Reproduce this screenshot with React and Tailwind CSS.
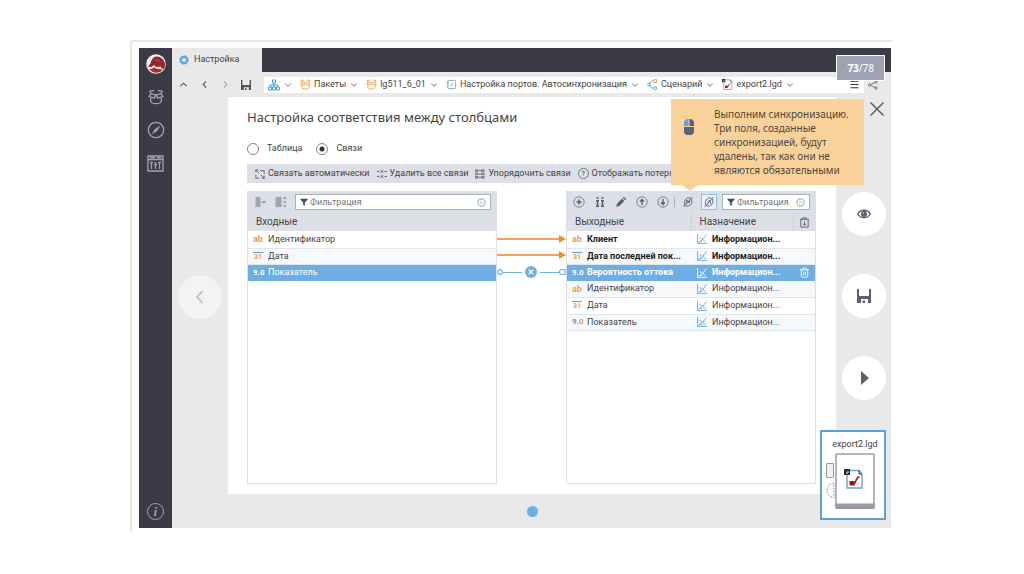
import { useState } from 'react'
import { Filter, Menu, X, Trash2 } from 'lucide-react'

const outputs = [
  { type: 'ab', name: 'Клиент', linked: true },
  { type: '31', name: 'Дата последней пок...', linked: true },
  { type: '9.0', name: 'Вероятность оттока', linked: true, selected: true },
  { type: 'ab', name: 'Идентификатор' },
  { type: '31', name: 'Дата' },
  { type: '9.0', name: 'Показатель' },
]

const inputs = [
  { type: 'ab', name: 'Идентификатор' },
  { type: '31', name: 'Дата' },
  { type: '9.0', name: 'Показатель', selected: true },
]

function Icon({ children, className = 'size-3', box = 12 }) {
  return (
    <svg viewBox={`0 0 ${box} ${box}`} className={`shrink-0 ${className}`} fill="none" stroke="currentColor" aria-hidden="true">
      {children}
    </svg>
  )
}

function Chevron({ className = 'size-2' }) {
  return (
    <Icon className={className} box={8}>
      <path d="M1.200 2.600 4 5.200 6.800 2.600" />
    </Icon>
  )
}

function OpenBox({ className }) {
  return (
    <Icon className={className}>
      <path d="M2 6v3.200c0 1 2 1.800 4 1.800s4-.8 4-1.800V6M2.200 3.400 6 4.600l3.800-1.200M2.200 3.400.8 5.600l3.800 1.300L6 4.600l1.400 2.300 3.800-1.300-1.400-2.200M1.200 1.600l3.300-.4M10.800 1.600l-3.300-.4M2.200 3.400l-1-1.800M9.800 3.400l1-1.800" />
    </Icon>
  )
}

function Floppy({ className }) {
  return (
    <svg viewBox="0 0 14 14" className={`shrink-0 ${className}`} fill="currentColor" aria-hidden="true">
      <path d="M0 0h2v7h10V0h2v14h-3v-4H4v4H0ZM5.500 11.500h2.500V14H5.500Z" />
    </svg>
  )
}

function Logo() {
  return (
    <svg viewBox="0 0 20 20" className="size-5" aria-hidden="true">
      <circle cx="10" cy="10" r="9.800" fill="#f5f1f0" />
      <path d="M4.500 9.500C5.500 5 8 2.500 11 2.600c4 .2 7 3 8 7 .2 2-.2 3.800-1.200 5.400-1.600-.2-2.800-1.200-3.300-2.800-1.500 1-3.500 1-5 .2L8 11l-2.500 2-3.500-.6Z" fill="#98252a" />
      <path d="M3 14.800c1.800.6 3.200.2 5-1.200 2.800 1.500 5.500 1.800 8.800 2C13.500 20 6.500 20 3 14.800Z" fill="#b22a2c" />
      <path d="M9.500 6.500c1.500-.8 3-.6 4 .6" stroke="#c98480" strokeWidth=".7" fill="none" />
    </svg>
  )
}

function TypeMark({ type, selected }) {
  if (type === 'ab') {
    return <span className="w-3 shrink-0 text-[9px] leading-3 font-bold text-[#f0a04b]">ab</span>
  }
  if (type === '31') {
    return (
      <span className="mr-[2px] w-[10px] shrink-0 border-t border-[#5a9fd0] text-center text-[7px] leading-2 font-bold text-[#f0a04b]">
        31
      </span>
    )
  }
  return (
    <span className={`w-3 shrink-0 text-[8px] leading-3 font-bold ${selected ? 'text-white' : 'text-[#4fa3d8]'}`}>
      9.<span className={selected ? 'text-white' : 'text-[#f0a04b]'}>0</span>
    </span>
  )
}

function PlotIcon({ selected }) {
  return (
    <Icon className={`size-[10px] ${selected ? 'text-white' : 'text-[#5fa8dc]'}`} box={10}>
      <path d="M.6 0v9.400H10M1.500 8.500 6 5l3.500-4.500M2.500 3l2 2M5 4.500l3 3.500M3 7.500h2" strokeWidth=".9" />
    </Icon>
  )
}

function ShareIcon() {
  return (
    <Icon className="size-[10px] text-[#666]">
      <circle cx="2" cy="6" r="1.400" />
      <circle cx="9.500" cy="2.500" r="1.400" />
      <circle cx="9.500" cy="9.500" r="1.400" />
      <path d="M3.300 5.400 8.200 3.100M3.300 6.600l4.900 2.300" />
    </Icon>
  )
}

function Crumb({ icon, children }) {
  return (
    <li className="flex items-center gap-1">
      <a href="#" className="flex items-center gap-[3px]">
        {icon}
        {children && <span className="whitespace-nowrap">{children}</span>}
      </a>
      <Chevron className="size-2 text-[#777]" />
    </li>
  )
}

function Breadcrumbs() {
  return (
    <nav className="flex h-4 min-w-0 flex-1 items-center bg-white pl-1">
      <ol className="flex items-center gap-2">
        <Crumb
          icon={
            <Icon className="size-3 text-[#4c97cc]">
              <path d="M4.500 1h3v3h-3ZM.6 8h3v3h-3ZM4.500 8h3v3h-3ZM8.400 8h3v3h-3ZM6 4v4M2 8V6h8v2" />
            </Icon>
          }
        />
        <Crumb icon={<OpenBox className="size-[11px] text-[#eba14e]" />}>Пакеты</Crumb>
        <Crumb icon={<OpenBox className="size-[11px] text-[#eba14e]" />}>lg511_6_01</Crumb>
        <Crumb
          icon={
            <Icon className="size-[11px] text-[#7ea9b8]">
              <rect x="2" y="1.500" width="8.500" height="9" rx="1" />
              <path d="M.5 4H3M.5 8H3M5.500 8l2-4" />
            </Icon>
          }
        >
          Настройка портов. Автосинхронизация
        </Crumb>
        <Crumb
          icon={
            <Icon className="size-[11px] text-[#4c97cc]">
              <circle cx="2.200" cy="6" r="1.500" />
              <path d="M3.500 5C4 2.500 5 2 7 2M3.500 7c.5 2.500 1.500 3 3.500 3" />
              <rect x="7.500" y=".8" width="3" height="3" stroke="#eba14e" />
              <circle cx="9" cy="10" r="1.500" />
            </Icon>
          }
        >
          Сценарий
        </Crumb>
        <Crumb icon={<ExportIcon className="size-[11px]" />}>export2.lgd</Crumb>
      </ol>
      <button className="mr-1 ml-auto" aria-label="Меню">
        <Menu className="size-[11px] text-[#333]" strokeWidth={2.500} />
      </button>
    </nav>
  )
}

function ExportIcon({ className }) {
  return (
    <svg viewBox="0 0 20 20" className={`shrink-0 ${className}`} fill="none" aria-hidden="true">
      <path d="M3 6v13h15V5l-3-3.500H6" stroke="#69a6c6" strokeWidth="1.400" />
      <path d="M15 1.500V5h3" stroke="#333" />
      <rect width="6" height="6" fill="#2b2b33" />
      <path d="M2 4h2V2" stroke="#fff" strokeWidth=".9" />
      <path d="M5.500 12h5v4.500h-5Z" fill="#a0151c" />
      <path d="M10 15c2-1 1.500-6 5.500-7.500" stroke="#a0151c" strokeWidth="1.500" />
    </svg>
  )
}

function FilterBox({ id, className }) {
  return (
    <label htmlFor={id} className={`flex h-4 min-w-0 items-center border border-[#aab0b8] bg-white px-1 ${className}`}>
      <Filter className="size-2 shrink-0 text-[#4a5060]" fill="currentColor" />
      <input
        id={id}
        placeholder="Фильтрация"
        className="ml-[2px] w-0 flex-1 text-[9px] leading-3 outline-none placeholder:text-[#777]"
      />
      <Icon className="size-[9px] text-[#9dbfc4]" box={10}>
        <circle cx="5" cy="5" r="4" strokeWidth="1.400" />
        <path d="m3.500 3.500 3 3m0-3-3 3" />
      </Icon>
    </label>
  )
}

const rowClass = 'border-b border-[#dfe6ec] odd:h-[17px] even:h-4 even:bg-[#f6f9fc]'
const selectedRow = 'h-[17px] bg-[#6eaee2] text-white'

function InputTable() {
  return (
    <section className="flex min-w-0 flex-1 flex-col border border-t-0 border-[#dcdfe3]">
      <div className="flex h-[22px] items-center gap-2 bg-[#dcdfe6] pr-[5px] pl-[7px]">
        <button className="text-[#8e939d]" aria-label="Связать">
          <Icon>
            <path d="M.5 2h5M.5 4h5M.5 6h5M.5 8h5M.5 10h5M6.500 6H11" strokeWidth="1.300" />
          </Icon>
        </button>
        <button className="text-[#8e939d]" aria-label="Список">
          <Icon>
            <path d="M.5 2h6M.5 4h6M.5 6h6M.5 8h6M.5 10h6M8.500 2H11M8.500 6H11M8.500 10H11" strokeWidth="1.300" />
          </Icon>
        </button>
        <FilterBox id="filter-in" className="flex-1" />
      </div>
      <table className="w-full table-fixed border-collapse text-left">
        <thead>
          <tr className="h-[18px] bg-[#dcdfe6] text-[10px] leading-3">
            <th className="p-0 pl-2 font-normal">Входные</th>
          </tr>
        </thead>
        <tbody>
          {inputs.map((row) => (
            <tr key={row.name} className={row.selected ? selectedRow : rowClass}>
              <td className="p-0 pl-[5px] leading-[15px]">
                <span className="flex items-center gap-[3px]">
                  <TypeMark type={row.type} selected={row.selected} />
                  {row.name}
                </span>
              </td>
            </tr>
          ))}
        </tbody>
      </table>
    </section>
  )
}

function Links() {
  return (
    <div className="w-[69px] shrink-0 pt-10">
      {[0, 1].map((i) => (
        <div key={i} className="flex h-4 items-center">
          <div className="h-[2px] flex-1 bg-[#f3a356]" />
          <svg viewBox="0 0 7 8" className="h-2 w-[7px] fill-[#f08c2a]" aria-hidden="true">
            <path d="M0 0l7 4-7 4Z" />
          </svg>
        </div>
      ))}
      <div className="flex h-[18px] items-center text-[#6eaee2]">
        <Icon className="size-[6px]" box={6}>
          <circle cx="3" cy="3" r="2.300" strokeWidth="1.200" />
        </Icon>
        <div className="h-px flex-1 bg-[#6eaee2]" />
        <button className="mx-[3px] grid size-3 place-items-center rounded-full bg-[#6eaee2] text-white" aria-label="Удалить связь">
          <X className="size-2" strokeWidth={3.500} />
        </button>
        <div className="h-px flex-1 bg-[#6eaee2]" />
        <Icon className="h-2 w-[7px]" box={7}>
          <path d="M6.500 1H3a2.500 2.500 0 0 0 0 5h3.500M6 .5v6" strokeWidth="1.200" />
        </Icon>
      </div>
    </div>
  )
}

function CircleIcon({ children }) {
  return (
    <Icon>
      <circle cx="6" cy="6" r="5.200" strokeWidth=".7" />
      {children}
    </Icon>
  )
}

function OutputTable() {
  return (
    <section className="flex min-w-0 flex-1 flex-col border border-t-0 border-[#dcdfe3]">
      <div className="flex h-[22px] items-center gap-[9px] bg-[#dcdfe6] pr-[5px] pl-[6px] text-[#596072]">
        <button aria-label="Добавить">
          <CircleIcon><path d="M6 3.500v5M3.500 6h5" strokeWidth="1.600" /></CircleIcon>
        </button>
        <button aria-label="Найти">
          <Icon>
            <path d="M3.500 1v2M8.500 1v2M3.500 4v6M8.500 4v6M2 10.300h3M7 10.300h3M2 4.700h3M7 4.700h3" strokeWidth="1.600" />
          </Icon>
        </button>
        <button aria-label="Изменить">
          <Icon>
            <path d="m1.500 10.500.8-3L7 2.800 9.200 5 4.500 9.700ZM8 1.800l.8-.8L11 3.200l-.8.8Z" fill="currentColor" strokeWidth=".4" />
          </Icon>
        </button>
        <button aria-label="Вверх">
          <CircleIcon><path d="M6 9V4M4 5.500l2-2 2 2" strokeWidth="1.400" /></CircleIcon>
        </button>
        <button aria-label="Вниз">
          <CircleIcon><path d="M6 3v5M4 6.500l2 2 2-2" strokeWidth="1.400" /></CircleIcon>
        </button>
        <div className="-mx-1 h-[10px] w-px bg-[#aab0b8]" />
        <button aria-label="Синхронизировать" className="ml-[2px]">
          <Icon>
            <path d="M8.500 2A5 5 0 0 0 3 9.500M9.500 3A5 5 0 0 1 3.500 10M1.500 11l9-10M4 8l1-4 2 3 1-3" strokeWidth=".9" />
          </Icon>
        </button>
        <button aria-label="Автосинхронизация" className="-mr-1 -ml-[2px] border border-[#8fc0e2] bg-[#eaf3fa] p-px">
          <Icon>
            <path d="M8.500 2A5 5 0 0 0 3 9.500M9.500 3A5 5 0 0 1 3.500 10M1.500 11l9-10M4.500 8.500 6.500 4l1.500 4" strokeWidth=".9" />
          </Icon>
        </button>
        <FilterBox id="filter-out" className="flex-1" />
      </div>
      <table className="w-full table-fixed border-collapse text-left">
        <colgroup>
          <col />
          <col className="w-[102px]" />
          <col className="w-[22px]" />
        </colgroup>
        <thead>
          <tr className="h-[18px] bg-[#dcdfe6] text-[10px] leading-3">
            <th className="p-0 pl-2 font-normal">Выходные</th>
            <th className="border-l border-[#cdd1d8] p-0 pl-2 font-normal">Назначение</th>
            <th className="border-l border-[#cdd1d8] p-0">
              <button className="mx-auto block text-[#596072]" aria-label="Очистить">
                <Icon className="size-[11px]">
                  <path d="M1 2.500h10M4 2.500V1h4v1.500M2 2.500V11h8V2.500M6 4.500V9M4.500 7.500 6 9l1.500-1.500" />
                </Icon>
              </button>
            </th>
          </tr>
        </thead>
        <tbody>
          {outputs.map((row) => (
            <tr
              key={row.name}
              className={`${row.selected ? selectedRow : rowClass} ${row.linked ? 'font-bold' : ''} ${row.linked && !row.selected ? 'text-[#1c1c1c]' : ''}`}
            >
              <td className="p-0 pl-[5px] leading-[15px] whitespace-nowrap">
                <span className="flex items-center gap-[3px]">
                  <TypeMark type={row.type} selected={row.selected} />
                  {row.name}
                </span>
              </td>
              <td className="p-0 pl-[6px] leading-[15px] whitespace-nowrap">
                <span className="flex items-center gap-[5px]">
                  <PlotIcon selected={row.selected} />
                  Информацион...
                </span>
              </td>
              <td className="p-0">
                {row.selected && (
                  <button className="mx-auto block" aria-label="Удалить">
                    <Trash2 className="size-[11px]" />
                  </button>
                )}
              </td>
            </tr>
          ))}
        </tbody>
      </table>
    </section>
  )
}

function Hint() {
  return (
    <aside className="absolute top-[51px] right-[27px] z-10 w-[193px] bg-[#f9d29b] font-['Noto_Sans',sans-serif]">
      <div className="flex items-start py-2 pl-[13px] text-[#4f463c]">
        <svg viewBox="0 0 10 16" className="mt-3 h-4 w-[10px] shrink-0" aria-hidden="true">
          <path d="M0 7V4a4 4 0 0 1 4.500-4v7Z" fill="#62a3d6" />
          <path d="M5.500 0A4 4 0 0 1 10 4v3H5.500ZM0 8h10v4a4 4 0 0 1-4 4H4a4 4 0 0 1-4-4Z" fill="#5b6273" />
        </svg>
        <p className="ml-5 text-[10px] leading-[14px] whitespace-nowrap">
          Выполним синхронизацию.
          <br />
          Три поля, созданные
          <br />
          синхронизацией, будут
          <br />
          удалены, так как они не
          <br />
          являются обязательными
        </p>
      </div>
      <svg viewBox="0 0 16 6" className="absolute top-full left-[11px] h-[6px] w-4 fill-[#f9d29b]" aria-hidden="true">
        <path d="M0 0h16L8 6Z" />
      </svg>
    </aside>
  )
}

function NodePreview() {
  return (
    <figure className="absolute right-[5px] bottom-2 z-10 flex h-[90px] w-[66px] flex-col border-2 border-[#5f9fd2] bg-white pt-[6px]">
      <figcaption className="pl-1 text-center text-[9px] leading-3">export2.lgd</figcaption>
      <svg viewBox="0 0 50 58" className="mt-[3px] ml-1 h-[58px] w-[50px]" fill="none" aria-hidden="true">
        <path d="M.5 10.500h7v14h-7Z" fill="#eeeef4" stroke="#9b9ba8" />
        <path d="M8 30.500a7 7 0 0 0 0 14Z" stroke="#777784" strokeDasharray="1.500 1.500" />
        <rect x="10" y="1" width="38" height="54" rx="1" fill="#fff" stroke="#9b9ba8" strokeWidth="1.500" />
        <path d="M9.500 50.500h39V56h-39Z" fill="#9b9ba8" />
      </svg>
      <ExportIcon className="absolute top-[37px] left-[22px] size-5" />
    </figure>
  )
}

export default function App() {
  const [mode, setMode] = useState('links')

  return (
    <div className="flex min-h-screen bg-white pt-10 pr-[132px] pb-[42px] pl-[130px] font-['Roboto','Noto_Sans',sans-serif] text-[9px] text-[#444]">
      <div className="flex min-w-0 flex-1 rounded-tl border-t-2 border-l-2 border-[#e6e6e6] pt-[6px] pr-px pb-1 pl-[7px]">
        <div className="relative flex min-w-0 flex-1 bg-[#e9e9e9]">
          <nav className="flex w-[33px] shrink-0 flex-col items-center bg-[#3a3b44] pt-[6px] pb-2 text-[#a2a4ad]">
            <Logo />
            <a href="#" className="mt-[15px]" aria-label="Пакеты">
              <OpenBox className="size-4" />
            </a>
            <a href="#" className="mt-4" aria-label="Обзор">
              <Icon className="size-[18px]" box={18}>
                <circle cx="9" cy="9" r="7.700" strokeWidth="1.300" />
                <path d="M13 5 10 10l-5 3 3-5Z" fill="currentColor" strokeWidth=".3" />
              </Icon>
            </a>
            <a href="#" className="mt-4" aria-label="Отчёты">
              <Icon className="size-[17px]" box={17}>
                <path d="M1 1h15v15H1ZM1 4.500h15M4.500 7v7M8.500 7v7M12.500 7v7M3 7.500h3M7 9.500h3M11 7.500h3M3 2.700h5M10 2.700h4" strokeWidth="1.300" />
              </Icon>
            </a>
            <a href="#" className="mt-auto" aria-label="Справка">
              <span className="grid size-[17px] place-items-center rounded-full border border-[#a2a4ad] font-['Liberation_Serif',serif] text-[12px] leading-3 font-bold italic">
                i
              </span>
            </a>
          </nav>

          <div className="flex min-w-0 flex-1 flex-col">
            <div className="flex h-6 bg-[#3a3b44]">
              <div className="flex w-[90px] items-center gap-[5px] bg-[#e9e9e9] pl-[7px]">
                <Icon className="size-[10px] text-[#5fa8dc]">
                  <circle cx="6" cy="6" r="3.800" strokeWidth="2.600" />
                  <circle cx="6" cy="6" r="5" strokeWidth="1.500" strokeDasharray="2 1.900" />
                </Icon>
                Настройка
              </div>
            </div>

            <div className="flex h-[25px] items-center">
              <div className="flex w-[92px] items-center pl-[7px] text-[#555]">
                <button aria-label="Вверх"><Chevron className="size-[9px] rotate-180" /></button>
                <button className="ml-3" aria-label="Назад"><Chevron className="size-[9px] rotate-90" /></button>
                <button className="ml-3 text-[#aaa]" aria-label="Вперёд"><Chevron className="size-[9px] -rotate-90" /></button>
                <button className="ml-[11px]" aria-label="Сохранить"><Floppy className="size-[10px]" /></button>
              </div>
              <Breadcrumbs />
              <button className="mr-[13px] ml-1" aria-label="Поделиться">
                <ShareIcon />
              </button>
            </div>

            <div className="flex flex-1">
              <div className="grid w-14 shrink-0 place-items-center pb-8">
                <button className="grid size-11 place-items-center rounded-full bg-[#f3f3f3] text-[#bbb]" aria-label="Предыдущий шаг">
                  <Icon className="size-4" box={16}>
                    <path d="M10.500 2 5 8l5.500 6" strokeWidth="1.500" />
                  </Icon>
                </button>
              </div>

              <div className="flex min-w-0 flex-1 flex-col">
                <main className="flex flex-1 flex-col bg-white pt-[10px] pr-5 pb-[10px] pl-[19px]">
                  <h1 className="font-['Noto_Sans',sans-serif] text-[13px] leading-5">Настройка соответствия между столбцами</h1>
                  <div className="mt-[14px] flex h-4 items-center">
                    {[
                      ['table', 'Таблица'],
                      ['links', 'Связи'],
                    ].map(([value, label]) => (
                      <label key={value} className="mr-[14px] flex items-center gap-2">
                        <input
                          type="radio"
                          name="mode"
                          checked={mode === value}
                          onChange={() => setMode(value)}
                          className="size-3 appearance-none rounded-full border border-[#888] bg-white checked:bg-[radial-gradient(circle,#333_0_2px,#fff_3px)]"
                        />
                        {label}
                      </label>
                    ))}
                  </div>

                  <div className="mt-[7px] flex h-[19px] items-center gap-[7px] overflow-hidden bg-[#dcdfe6] pl-2 whitespace-nowrap">
                    <button className="flex items-center gap-[3px]">
                      <Icon className="size-[10px]">
                        <path d="M1 4V1h3M11 8v3H8M1 1l4 4M11 11 7 7M6 2h5v4M1 7v4h4" strokeWidth=".9" />
                      </Icon>
                      Связать автоматически
                    </button>
                    <button className="flex items-center gap-[3px]">
                      <Icon className="size-[10px]">
                        <path d="M0 3h3M9 3h3M0 9h3M9 9h3M4.500 1.500l3 3m0-3-3 3M4.500 7.500l3 3m0-3-3 3" strokeWidth=".9" />
                      </Icon>
                      Удалить все связи
                    </button>
                    <button className="flex items-center gap-[3px]">
                      <Icon className="size-[10px]">
                        <path d="M.5 1h3v2h-3ZM.5 5h3v2h-3ZM.5 9h3v2h-3ZM8 1h3v2H8ZM8 5h3v2H8ZM8 9h3v2H8ZM4 2h4M4 6h4M4 10h4" strokeWidth=".8" />
                      </Icon>
                      Упорядочить связи
                    </button>
                    <button className="flex items-center gap-[3px]">
                      <span className="grid size-[11px] place-items-center rounded-full border border-[#777] text-[7px] leading-2">?</span>
                      Отображать потерянные
                    </button>
                  </div>

                  <div className="mt-2 flex flex-1">
                    <InputTable />
                    <Links />
                    <OutputTable />
                  </div>
                </main>
                <div className="grid h-[34px] shrink-0 place-items-center">
                  <button className="size-[11px] rounded-full bg-[#6eaee2]" aria-label="Страница 1" />
                </div>
              </div>

              <div className="flex w-[55px] shrink-0 flex-col items-center gap-[38px] pt-1 text-[#596072]">
                <button className="mr-[6px] self-end" aria-label="Закрыть">
                  <Icon className="size-4" box={16}>
                    <path d="m1.500 1.500 13 13m0-13-13 13" strokeWidth="1.500" />
                  </Icon>
                </button>
                <button className="mt-[37px] grid size-11 place-items-center rounded-full bg-white" aria-label="Просмотр">
                  <Icon className="size-[14px]" box={14}>
                    <path d="M.7 7C3.500 2 10.500 2 13.300 7 10.500 12 3.500 12 .7 7Z" strokeWidth="1.300" />
                    <circle cx="7" cy="7" r="2.600" fill="currentColor" />
                    <path d="M6 6.500 7 5.700" stroke="#fff" />
                  </Icon>
                </button>
                <button className="grid size-11 place-items-center rounded-full bg-white" aria-label="Сохранить узел">
                  <Floppy className="size-[14px]" />
                </button>
                <button className="grid size-11 place-items-center rounded-full bg-white" aria-label="Выполнить">
                  <svg viewBox="0 0 8 14" className="ml-[3px] h-[14px] w-2 fill-current" aria-hidden="true">
                    <path d="M0 0l8 7-8 7Z" />
                  </svg>
                </button>
              </div>
            </div>
          </div>

          <div className="absolute top-[7px] right-[6px] z-10 border border-white bg-[#9fa2b2] px-[10px] py-1 font-['Noto_Sans',sans-serif] text-[10px] leading-4 text-white">
            <b>73</b>/78
          </div>
          <Hint />
          <NodePreview />
        </div>
      </div>
    </div>
  )
}
